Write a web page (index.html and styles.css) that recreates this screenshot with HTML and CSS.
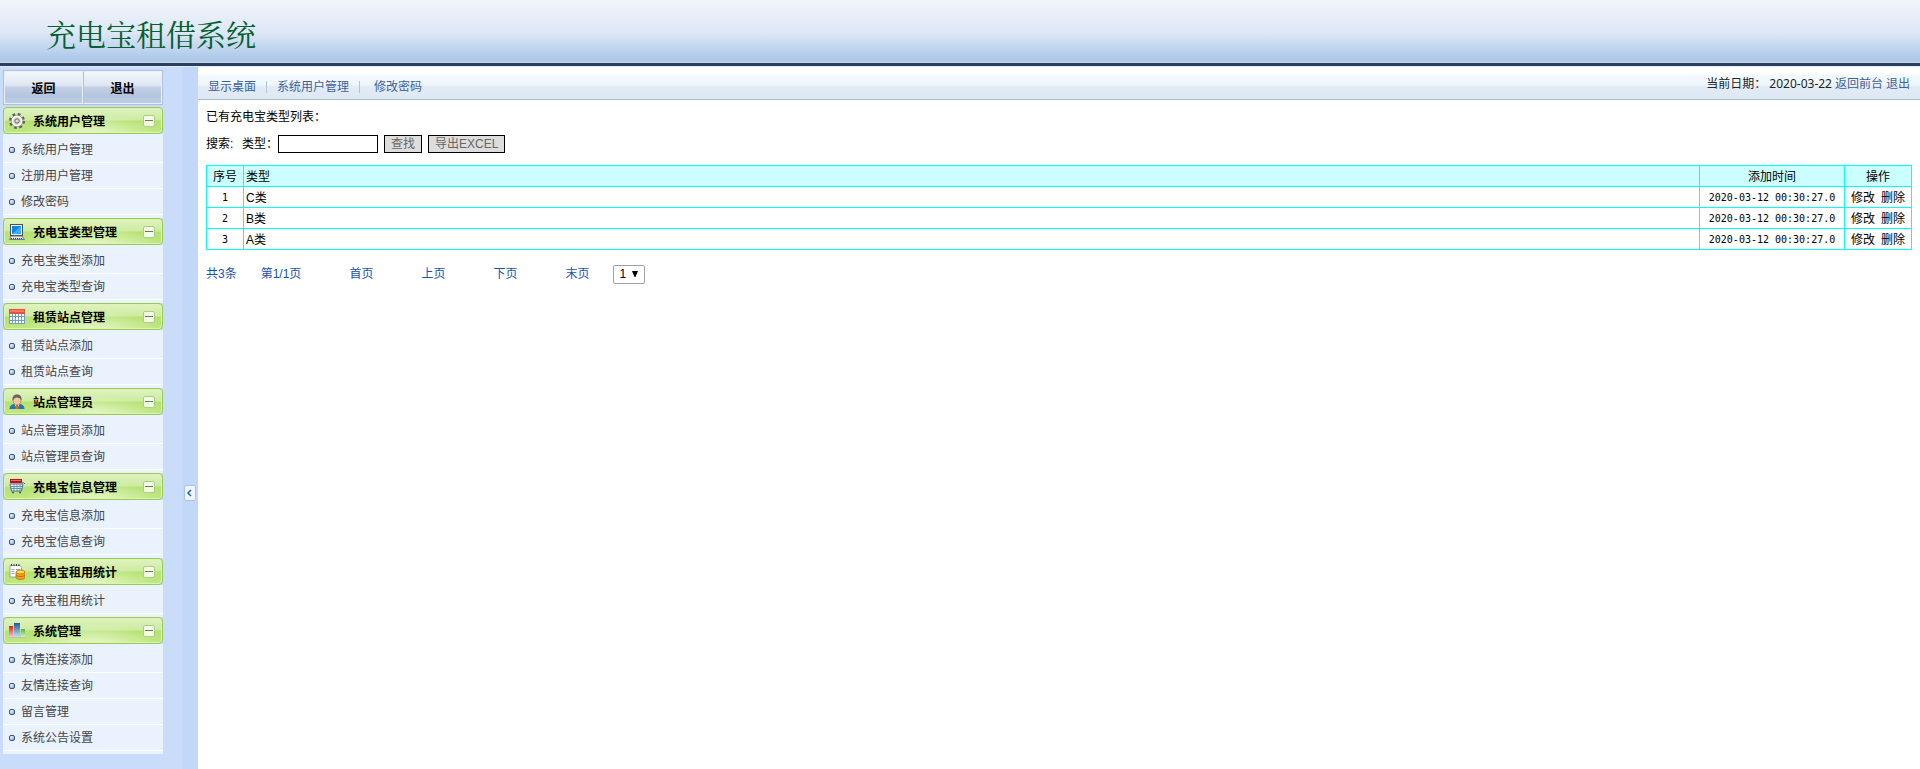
FILE: index.html
```html
<!DOCTYPE html>
<html lang="zh-CN">

<head>
    <meta charset="UTF-8">
    <meta name="viewport" content="width=device-width, initial-scale=1.0">
    <title>充电宝租借系统</title>
    <link rel="stylesheet" href="styles.css">
</head>

<body>
    <svg class="defs" aria-hidden="true">
        <defs>
            <linearGradient id="red-bar" x1="0" y1="0" x2="0" y2="1">
                <stop offset="0" stop-color="#d8201c" />
                <stop offset="1" stop-color="#f3c9c9" />
            </linearGradient>
            <linearGradient id="blue-bar" x1="0" y1="0" x2="0" y2="1">
                <stop offset="0" stop-color="#1c5c9e" />
                <stop offset="1" stop-color="#c9dcec" />
            </linearGradient>
            <linearGradient id="green-bar" x1="0" y1="0" x2="0" y2="1">
                <stop offset="0" stop-color="#57b043" />
                <stop offset="1" stop-color="#d9f0cd" />
            </linearGradient>
        </defs>
        <symbol id="minus" viewBox="0 0 12 12">
            <rect x="0.5" y="0.5" width="11" height="11" rx="1.5" fill="#f4fbe9" stroke="#a8cf83" />
            <path d="M2 5.5h8" stroke="#5f8a3c" />
        </symbol>
    </svg>

    <header class="header">
        <h1>充电宝租借系统</h1>
    </header>

    <div class="container">
        <aside class="sidebar">
            <div class="side-btns">
                <button type="button">返回</button>
                <button type="button">退出</button>
            </div>

            <nav class="menu">
                <h2>
                    <svg class="icon" viewBox="0 0 16 16">
                        <circle cx="8" cy="8" r="6.5" fill="none" stroke="#5b5d60" stroke-width="3" stroke-dasharray="2.6 2.5" />
                        <circle cx="8" cy="8" r="4.8" fill="#d9dadb" stroke="#fff" stroke-width="2" />
                        <circle cx="8" cy="8" r="5.8" fill="none" stroke="#8b8d90" stroke-width="0.7" />
                        <circle cx="8" cy="8" r="2.2" fill="#cfe9a7" stroke="#66686b" />
                    </svg>
                    <span>系统用户管理</span>
                    <svg class="fold"><use href="#minus" /></svg>
                </h2>
                <ul>
                    <li><a href="#">系统用户管理</a></li>
                    <li><a href="#">注册用户管理</a></li>
                    <li><a href="#">修改密码</a></li>
                </ul>

                <h2>
                    <svg class="icon" viewBox="0 0 16 16">
                        <rect x="1.5" y="0.5" width="12" height="11" fill="#eef1f5" stroke="#47505e" />
                        <rect x="3" y="2" width="9" height="8" fill="#0a84ea" />
                        <path d="M3 10L12 2v8z" fill="#37aefc" />
                        <path d="M2 12h11l2.500 3.500h-15z" fill="#e3e6ea" stroke="#56606d" stroke-width="0.8" />
                        <path d="M2 14.500h12" stroke="#33393f" stroke-dasharray="1 1" />
                    </svg>
                    <span>充电宝类型管理</span>
                    <svg class="fold"><use href="#minus" /></svg>
                </h2>
                <ul>
                    <li><a href="#">充电宝类型添加</a></li>
                    <li><a href="#">充电宝类型查询</a></li>
                </ul>

                <h2>
                    <svg class="icon" viewBox="0 0 16 16">
                        <rect x="0" y="1" width="16" height="14" fill="#6e9bc8" />
                        <rect x="0" y="0" width="16" height="5" fill="#e8513d" />
                        <path d="M1 2h14" stroke="#f8a18f" />
                        <path d="M1 5h2v2h-2zM4 5h2v2h-2zM7 5h2v2h-2zM10 5h2v2h-2zM13 5h2v2h-2zM1 8h2v3h-2zM4 8h2v3h-2zM7 8h2v3h-2zM10 8h2v3h-2zM13 8h2v3h-2zM1 12h2v2h-2zM4 12h2v2h-2zM7 12h2v2h-2zM10 12h2v2h-2zM13 12h2v2h-2z" fill="#fff" />
                    </svg>
                    <span>租赁站点管理</span>
                    <svg class="fold"><use href="#minus" /></svg>
                </h2>
                <ul>
                    <li><a href="#">租赁站点添加</a></li>
                    <li><a href="#">租赁站点查询</a></li>
                </ul>

                <h2>
                    <svg class="icon" viewBox="0 0 16 16">
                        <path d="M0.500 15c0-3 2-4.500 4.500-5h6c2.500.5 4.500 2 4.500 5z" fill="#2376b0" />
                        <path d="M5.500 10h5L8 15z" fill="#fff" />
                        <path d="M7 11h2l.7 4h-3.400z" fill="#e8622a" />
                        <ellipse cx="8" cy="6.500" rx="3.800" ry="4.200" fill="#f4c79c" stroke="#a9713f" stroke-width="0.600" />
                        <path d="M3.500 7C3 3 4.500 0.500 8 0.500S13 3 12.500 7C11.500 4 10 4 7.500 3.500 5.500 4 4.500 5 3.500 7z" fill="#66645c" />
                    </svg>
                    <span>站点管理员</span>
                    <svg class="fold"><use href="#minus" /></svg>
                </h2>
                <ul>
                    <li><a href="#">站点管理员添加</a></li>
                    <li><a href="#">站点管理员查询</a></li>
                </ul>

                <h2>
                    <svg class="icon" viewBox="0 0 16 16">
                        <rect x="1" y="0" width="12" height="4" fill="#c20f16" />
                        <path d="M2 1.500h10" stroke="#ec6b6b" />
                        <path d="M1 5h13l-1.500 7h-10z" fill="#fff" stroke="#3f6e99" />
                        <path d="M1.500 7.500h12M2 9.500h11M5 5v7M8 5v7M11 5v7" stroke="#4f7fab" stroke-width="0.800" />
                        <path d="M13 4l1.500-.5L16 5" fill="none" stroke="#3f6e99" />
                        <circle cx="4" cy="13.500" r="1" fill="#34597c" />
                        <circle cx="11" cy="13.500" r="1" fill="#34597c" />
                    </svg>
                    <span>充电宝信息管理</span>
                    <svg class="fold"><use href="#minus" /></svg>
                </h2>
                <ul>
                    <li><a href="#">充电宝信息添加</a></li>
                    <li><a href="#">充电宝信息查询</a></li>
                </ul>

                <h2>
                    <svg class="icon" viewBox="0 0 16 16">
                        <path d="M1 1.500h10l1.500 2V13H1z" fill="#fff" stroke="#8d8f93" stroke-width="0.800" />
                        <path d="M2 1h10" stroke="#3d3d3d" stroke-width="2" stroke-dasharray="1 1.500" />
                        <path d="M2.500 5.500h3M2.500 7.500h3M2.500 9.500h3M7 5.500h4" stroke="#8fa2b5" />
                        <path d="M7 8v5.500c0 2.500 9 2.500 9 0V8z" fill="#f5a416" stroke="#b0600a" stroke-width="0.700" />
                        <ellipse cx="11.500" cy="8" rx="4.300" ry="2" fill="#ffe14f" stroke="#b0600a" stroke-width="0.700" />
                        <path d="M7 11c1 2 8 2 9 0" fill="none" stroke="#b0600a" stroke-width="0.800" />
                    </svg>
                    <span>充电宝租用统计</span>
                    <svg class="fold"><use href="#minus" /></svg>
                </h2>
                <ul>
                    <li><a href="#">充电宝租用统计</a></li>
                </ul>

                <h2>
                    <svg class="icon" viewBox="0 0 16 16">
                        <rect x="0" y="3" width="4" height="11" fill="url(#red-bar)" />
                        <rect x="5" y="0" width="6" height="14" fill="url(#blue-bar)" />
                        <rect x="12" y="6" width="4" height="8" fill="url(#green-bar)" />
                        <path d="M0 14.500h16" stroke="#b9c4b1" />
                    </svg>
                    <span>系统管理</span>
                    <svg class="fold"><use href="#minus" /></svg>
                </h2>
                <ul>
                    <li><a href="#">友情连接添加</a></li>
                    <li><a href="#">友情连接查询</a></li>
                    <li><a href="#">留言管理</a></li>
                    <li><a href="#">系统公告设置</a></li>
                </ul>
            </nav>
        </aside>

        <div class="splitter">
            <button type="button" aria-label="收起菜单">
                <svg viewBox="0 0 9 14"><path d="M6 4L3 7l3 3" fill="none" stroke="#2d5f9e" stroke-width="1.500" /></svg>
            </button>
        </div>

        <main class="main">
            <div class="toolbar">
                <div class="links">
                    <a href="#">显示桌面</a>
                    <a href="#">系统用户管理</a>
                    <a href="#">修改密码</a>
                </div>
                <div class="info">
                    <span>当前日期：</span>
                    <span>2020-03-22</span>
                    <a href="#">返回前台</a>
                    <a href="#">退出</a>
                </div>
            </div>

            <div class="content">
                <p>已有充电宝类型列表：</p>
                <form class="search">
                    <span class="search-title">搜索:</span>
                    <label for="leixing">类型：</label>
                    <input type="text" id="leixing" name="leixing">
                    <button type="button">查找</button>
                    <button type="button">导出EXCEL</button>
                </form>

                <table class="list">
                    <thead>
                        <tr>
                            <th class="no">序号</th>
                            <th class="type">类型</th>
                            <th class="time">添加时间</th>
                            <th class="action">操作</th>
                        </tr>
                    </thead>
                    <tbody>
                        <tr>
                            <td class="no">1</td>
                            <td class="type">C类</td>
                            <td class="time">2020-03-12 00:30:27.0</td>
                            <td class="action"><a href="#">修改</a><a href="#">删除</a></td>
                        </tr>
                        <tr>
                            <td class="no">2</td>
                            <td class="type">B类</td>
                            <td class="time">2020-03-12 00:30:27.0</td>
                            <td class="action"><a href="#">修改</a><a href="#">删除</a></td>
                        </tr>
                        <tr>
                            <td class="no">3</td>
                            <td class="type">A类</td>
                            <td class="time">2020-03-12 00:30:27.0</td>
                            <td class="action"><a href="#">修改</a><a href="#">删除</a></td>
                        </tr>
                    </tbody>
                </table>

                <div class="pages">
                    <div class="count">
                        <span>共3条</span>
                        <span>第1/1页</span>
                    </div>
                    <a href="#">首页</a>
                    <a href="#">上页</a>
                    <a href="#">下页</a>
                    <div class="count">
                        <a href="#">末页</a>
                        <div class="picker">
                            <select aria-label="页码">
                                <option>1</option>
                            </select>
                            <svg viewBox="0 0 6 6"><path d="M0 0h6L3.500 6h-1z" /></svg>
                        </div>
                    </div>
                </div>
            </div>
        </main>
    </div>
</body>

</html>
```
FILE: styles.css
```css
*,
*::before {
    margin: 0;
    padding: 0;
    box-sizing: border-box;
}

body {
    display: flex;
    flex-direction: column;
    min-height: 100vh;
    font-family: "Liberation Sans", "Noto Sans CJK SC", sans-serif;
    font-size: 12px;
    line-height: 20px;
    color: #000;
    background-color: #fff;
}

a {
    color: inherit;
    text-decoration: none;
}

.defs {
    position: absolute;
    width: 0;
    height: 0;
}

/* header */
.header {
    display: flex;
    align-items: center;
    height: 67px;
    padding: 0 46px;
    border-bottom: 1px solid #dfe9fa;
    background: linear-gradient(#f1f5fa, #dde7f5 50%, #a9c6e9 61px, #c5d3e3 62px, #c5d3e3 63px, #2c3e60 63px);
}

.header h1 {
    font-family: "Noto Serif CJK SC", "Noto Sans CJK SC", serif;
    font-size: 30px;
    font-weight: 400;
    line-height: 60px;
    color: #05602f;
}

.container {
    display: flex;
    flex: 1;
}

/* left menu */
.sidebar {
    width: 182px;
    padding: 3px 19px 15px 3px;
    background-color: #c9ddfb;
}

.side-btns {
    display: flex;
    width: 160px;
    margin-bottom: 2px;
    border: 1px solid #b4c0d9;
}

.side-btns button {
    flex: 1;
    height: 33px;
    border: 1px solid #e9eef7;
    background: linear-gradient(#f3f6fb, #dfe7f2 42%, #c3d0e5 50%, #b5c6e0 75%, #bccde6);
    font-family: inherit;
    font-size: 12px;
    font-weight: bold;
}

.side-btns button + button {
    border-left: 1px solid #b4c0d9;
}

.menu {
    width: 160px;
}

.menu h2 {
    display: flex;
    align-items: center;
    height: 27px;
    padding: 0 7px 0 5px;
    border: 1px solid #98cb52;
    border-radius: 4px;
    background: radial-gradient(ellipse at 55% 110%, #e9f8cf, rgba(233, 248, 207, 0) 55%), linear-gradient(#e0f3c0, #cdeba0 48%, #b5e170 52%, #c0e784);
    box-shadow: inset 0 0 0 1px #dcf2b8;
    font-size: 12px;
}

.menu h2 span {
    flex: 1;
    padding-top: 2px;
}

.icon {
    width: 16px;
    height: 16px;
    margin-right: 8px;
}

.fold {
    width: 12px;
    height: 12px;
}

.menu ul {
    padding: 3px 0;
    background-color: #eaf2fe;
    list-style: none;
}

.menu li {
    display: flex;
    align-items: center;
    height: 26px;
    padding-left: 6px;
    border-bottom: 1px solid #fff;
    color: #444;
}

/* small square bullet */
.menu li::before {
    content: "";
    width: 6px;
    height: 6px;
    margin-right: 6px;
    border: 1px solid #3c5170;
    border-radius: 2px;
    background: linear-gradient(135deg, #fff, #7aa9e4);
}

.splitter {
    display: flex;
    flex-direction: column;
    width: 16px;
    background-color: #c3d8f8;
}

.splitter::before {
    content: "";
    flex: 14;
}

.splitter::after {
    content: "";
    flex: 9;
}

.splitter button {
    width: 12px;
    height: 16px;
    margin-left: 2px;
    border: 1px solid #a9c4ec;
    border-radius: 2px;
    background-color: #eff5fe;
}

.splitter svg {
    display: block;
    width: 9px;
    height: 14px;
}

/* right side */
.main {
    flex: 1;
}

.toolbar {
    display: flex;
    justify-content: space-between;
    height: 33px;
    padding: 7px 10px 0;
    border-bottom: 1px solid #a9bfcb;
    background: linear-gradient(#fff 7px, #f3f9fd 8px, #f0f7fc 17px, #e1ebf5 20px, #dfe9f4);
    font-family: "Noto Sans", "Noto Sans CJK SC", sans-serif;
    color: #3f609c;
}

.links {
    display: flex;
    align-items: center;
}

.links a + a {
    margin-left: 10px;
    padding-left: 11px;
    background: linear-gradient(#b5c3d8, #b5c3d8) left center / 1px 12px no-repeat;
}

.links a:last-child {
    padding-left: 15px;
}

.info {
    display: flex;
    gap: 3px;
}

.info span {
    color: #222;
}

.content {
    padding: 7px 8px 0;
}

.search {
    display: flex;
    align-items: center;
    gap: 6px;
    height: 18px;
    margin: 8px 0 12px;
}

.search-title {
    width: 30px;
}

.search label {
    width: 30px;
    white-space: nowrap;
}

.search input {
    width: 100px;
    height: 18px;
    border: 1px solid #000;
}

.search button {
    height: 18px;
    padding: 0 6px;
    border: 1px solid #000;
    background-color: #ddd;
    font-family: inherit;
    font-size: 12px;
    line-height: 16px;
    color: #666;
}

.list {
    width: 100%;
    border-collapse: collapse;
    table-layout: fixed;
}

.list th,
.list td {
    height: 21px;
    padding-top: 2px;
    border: 1px solid #0ff;
    font-weight: normal;
    line-height: 18px;
    text-align: center;
}

.list th {
    background-color: #cff;
}

.list .no {
    width: 37px;
}

.list .type {
    padding-left: 2px;
    text-align: left;
}

.list .time {
    width: 145px;
}

.list .action {
    width: 67px;
}

.list td.no,
.list td.time {
    font-family: "DejaVu Sans Mono", monospace;
    font-size: 10px;
}

.list .action a + a {
    margin-left: 6px;
}

.pages {
    display: flex;
    align-items: center;
    gap: 48px;
    margin-top: 14px;
    color: #1452b0;
}

.count {
    display: flex;
    align-items: center;
    gap: 24px;
}

.picker {
    position: relative;
}

.picker select {
    display: block;
    width: 32px;
    height: 19px;
    padding-left: 5px;
    border: 1px solid #a0a0a0;
    border-radius: 2px;
    background-color: #fff;
    appearance: none;
    font-family: inherit;
    font-size: 12px;
}

/* arrow over the select */
.picker svg {
    position: absolute;
    top: 6px;
    right: 7px;
    width: 6px;
    height: 6px;
    pointer-events: none;
}
```
